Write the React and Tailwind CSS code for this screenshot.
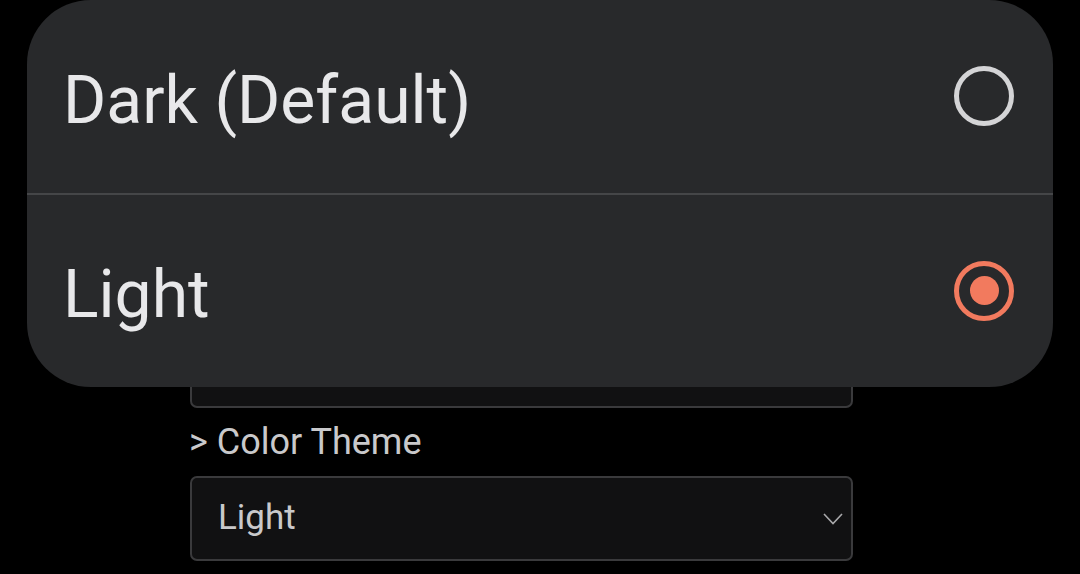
function Radio({ checked }) {
  return (
    <span
      className={
        "flex h-[60px] w-[60px] shrink-0 items-center justify-center rounded-full border-[5px] " +
        (checked ? "border-[#f27a5e]" : "border-[#d4d4d6]")
      }
    >
      {checked && <span className="h-[29px] w-[29px] rounded-full bg-[#f27a5e]" />}
    </span>
  );
}

function Option({ label, checked }) {
  return (
    <div className="flex flex-1 items-center justify-between pl-[36px] pr-[39px]">
      <span className="pt-2 text-[66px] leading-[1.17] text-[#e8e8ea]">{label}</span>
      <Radio checked={checked} />
    </div>
  );
}

export default function App() {
  return (
    <div
      className="relative h-[574px] w-[1080px] overflow-hidden bg-black"
      style={{ fontFamily: "Roboto, 'Noto Sans', sans-serif" }}
    >
      {/* settings form underneath */}
      <div className="ml-[190px] w-[663px] pt-[323px]">
        <div className="h-[85px] rounded-[7px] border-2 border-[#3a3a3c] bg-[#111112]" />
        <div className="mt-[12px] -ml-[1px] text-[36px] leading-[44px] text-[#c9c9cb]">&gt; Color Theme</div>
        <div className="mt-[12px] flex h-[85px] items-center justify-between rounded-[7px] border-2 border-[#3a3a3c] bg-[#111112] pl-[26px] pr-[8px]">
          <span className="text-[35px] leading-[1.17] text-[#c9c9cb]">Light</span>
          <svg width="20" height="12" viewBox="0 0 20 12" fill="none" stroke="#a9a9ab" strokeWidth="1.6">
            <path d="M1 1l9 9.5L19 1" />
          </svg>
        </div>
      </div>

      {/* theme picker sheet */}
      <div className="absolute left-[27px] top-0 flex h-[387px] w-[1026px] flex-col rounded-[64px] bg-[#28292b]">
        <Option label="Dark (Default)" />
        <div className="h-[2px] bg-[#454648]" />
        <Option label="Light" checked />
      </div>
    </div>
  );
}
